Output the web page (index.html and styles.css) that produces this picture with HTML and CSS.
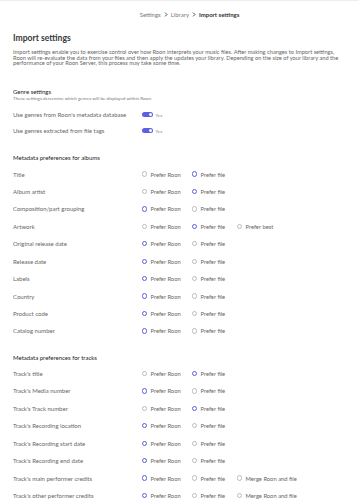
FILE: index.html
```
<!DOCTYPE html>
<html lang="en">
<head>
    <meta charset="UTF-8">
    <meta name="viewport" content="width=device-width, initial-scale=1.0">
    <title>Import settings</title>
    <link rel="stylesheet" href="styles.css">
</head>
<body>
    <nav class="crumbs">
        <span>Settings</span>
        <svg class="chev" viewBox="0 0 6 8"><path d="M1.5 1 L4.5 4 L1.5 7" /></svg>
        <span>Library</span>
        <svg class="chev" viewBox="0 0 6 8"><path d="M1.5 1 L4.5 4 L1.5 7" /></svg>
        <b>Import settings</b>
    </nav>

    <main class="page">
        <h1>Import settings</h1>
        <p class="intro">Import settings enable you to exercise control over how Roon interprets your music files. After making changes to Import settings, Roon will re-evaluate the data from your files and then apply the updates your library. Depending on the size of your library and the performance of your Roon Server, this process may take some time.</p>

        <section class="genre">
            <h2>Genre settings</h2>
            <p class="hint">These settings determine which genres will be displayed within Roon.</p>
            <div class="trow">
                <span class="label">Use genres from Roon's metadata database</span>
                <span class="toggle"></span><span class="yes">Yes</span>
            </div>
            <div class="trow">
                <span class="label">Use genres extracted from file tags</span>
                <span class="toggle"></span><span class="yes">Yes</span>
            </div>
        </section>

        <section class="prefs albums">
            <h2>Metadata preferences for albums</h2>
            <div class="rows">
                <div class="row"><span class="label">Title</span><span class="opt"><i class="radio"></i>Prefer Roon</span><span class="opt"><i class="radio on"></i>Prefer file</span></div>
                <div class="row"><span class="label">Album artist</span><span class="opt"><i class="radio"></i>Prefer Roon</span><span class="opt"><i class="radio on"></i>Prefer file</span></div>
                <div class="row"><span class="label">Composition/part grouping</span><span class="opt"><i class="radio on"></i>Prefer Roon</span><span class="opt"><i class="radio"></i>Prefer file</span></div>
                <div class="row"><span class="label">Artwork</span><span class="opt"><i class="radio"></i>Prefer Roon</span><span class="opt"><i class="radio on"></i>Prefer file</span><span class="opt"><i class="radio"></i>Prefer best</span></div>
                <div class="row"><span class="label">Original release date</span><span class="opt"><i class="radio on"></i>Prefer Roon</span><span class="opt"><i class="radio"></i>Prefer file</span></div>
                <div class="row"><span class="label">Release date</span><span class="opt"><i class="radio on"></i>Prefer Roon</span><span class="opt"><i class="radio"></i>Prefer file</span></div>
                <div class="row"><span class="label">Labels</span><span class="opt"><i class="radio on"></i>Prefer Roon</span><span class="opt"><i class="radio"></i>Prefer file</span></div>
                <div class="row"><span class="label">Country</span><span class="opt"><i class="radio on"></i>Prefer Roon</span><span class="opt"><i class="radio"></i>Prefer file</span></div>
                <div class="row"><span class="label">Product code</span><span class="opt"><i class="radio on"></i>Prefer Roon</span><span class="opt"><i class="radio"></i>Prefer file</span></div>
                <div class="row"><span class="label">Catalog number</span><span class="opt"><i class="radio on"></i>Prefer Roon</span><span class="opt"><i class="radio"></i>Prefer file</span></div>
            </div>
        </section>

        <section class="prefs tracks">
            <h2>Metadata preferences for tracks</h2>
            <div class="rows">
                <div class="row"><span class="label">Track's title</span><span class="opt"><i class="radio"></i>Prefer Roon</span><span class="opt"><i class="radio on"></i>Prefer file</span></div>
                <div class="row"><span class="label">Track's Media number</span><span class="opt"><i class="radio on"></i>Prefer Roon</span><span class="opt"><i class="radio"></i>Prefer file</span></div>
                <div class="row"><span class="label">Track's Track number</span><span class="opt"><i class="radio"></i>Prefer Roon</span><span class="opt"><i class="radio on"></i>Prefer file</span></div>
                <div class="row"><span class="label">Track's Recording location</span><span class="opt"><i class="radio on"></i>Prefer Roon</span><span class="opt"><i class="radio"></i>Prefer file</span></div>
                <div class="row"><span class="label">Track's Recording start date</span><span class="opt"><i class="radio on"></i>Prefer Roon</span><span class="opt"><i class="radio"></i>Prefer file</span></div>
                <div class="row"><span class="label">Track's Recording end date</span><span class="opt"><i class="radio on"></i>Prefer Roon</span><span class="opt"><i class="radio"></i>Prefer file</span></div>
                <div class="row"><span class="label">Track's main performer credits</span><span class="opt"><i class="radio on"></i>Prefer Roon</span><span class="opt"><i class="radio"></i>Prefer file</span><span class="opt"><i class="radio"></i>Merge Roon and file</span></div>
                <div class="row"><span class="label">Track's other performer credits</span><span class="opt"><i class="radio on"></i>Prefer Roon</span><span class="opt"><i class="radio"></i>Prefer file</span><span class="opt"><i class="radio"></i>Merge Roon and file</span></div>
            </div>
        </section>
    </main>
</body>
</html>
```

FILE: styles.css
```
body {
    font-family: Lato, 'Liberation Sans', sans-serif;
    margin: 0;
    padding: 0;
    color: #666;
    background-color: #fff;
}
.crumbs {
    border-top: 1px solid #eee;
    height: 27px;
    display: flex;
    justify-content: center;
    align-items: center;
    gap: 3px;
    font-size: 6px;
    color: #777;
    padding-left: 20px;
}
.crumbs b {
    font-weight: 700;
    color: #333;
}
.chev {
    width: 4px;
    height: 5px;
}
.chev path {
    fill: none;
    stroke: #333;
    stroke-width: 1.4;
}
.page {
    padding: 0 11px 0 13px;
}
h1 {
    margin: 5px 0 0;
    font-size: 8.6px;
    line-height: 10px;
    font-weight: 700;
    color: #383838;
}
.intro {
    margin: 6px 0 0;
    font-size: 5.7px;
    line-height: 5.7px;
    color: #666;
}
h2 {
    margin: 0;
    font-size: 6px;
    line-height: 7px;
    font-weight: 400;
    color: #222;
}
.genre {
    margin-top: 22px;
}
.hint {
    margin: 1px 0 0;
    font-size: 4.6px;
    line-height: 5px;
    color: #777;
}
.trow {
    height: 16px;
    display: flex;
    align-items: center;
}
.genre .trow:first-of-type {
    margin-top: 5.5px;
}
.label {
    width: 128.5px;
    flex-shrink: 0;
    font-size: 6px;
    color: #666;
    white-space: nowrap;
}
.toggle {
    position: relative;
    width: 11px;
    height: 4.5px;
    border-radius: 3px;
    background: #5b5fe0;
}
.toggle::after {
    content: "";
    position: absolute;
    right: 0.6px;
    top: 0.6px;
    width: 3.3px;
    height: 3.3px;
    border-radius: 50%;
    background: #fff;
}
.yes {
    margin-left: 3px;
    font-size: 4.6px;
    color: #888;
}
.albums {
    margin-top: 15.5px;
}
.tracks {
    margin-top: 13.9px;
}
.rows {
    margin-top: 4.3px;
}
.row {
    height: 17.43px;
    display: flex;
    align-items: center;
}
.opt {
    width: 50px;
    display: flex;
    align-items: center;
    font-size: 5.8px;
    color: #666;
    white-space: nowrap;
}
.opt:nth-child(3) {
    width: 45px;
}
.radio {
    box-sizing: border-box;
    width: 5.4px;
    height: 5.4px;
    border-radius: 50%;
    border: 0.6px solid #bbb;
    margin-right: 3.6px;
    flex-shrink: 0;
}
.radio.on {
    border: 1.7px solid #5b5fe0;
}
```
